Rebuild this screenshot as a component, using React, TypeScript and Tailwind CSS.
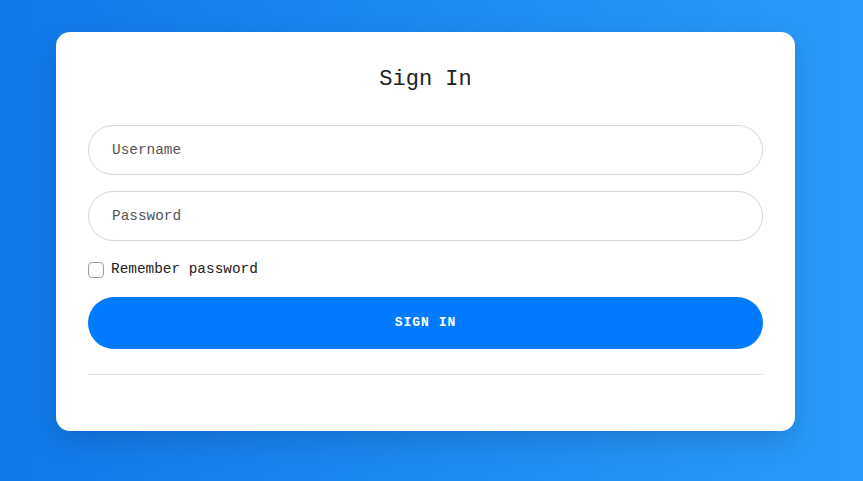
import React from "react";

export default function App() {
  return (
    <div
      className="w-[863px] h-[481px] bg-gradient-to-r from-[#1078ea] to-[#2a9bfa] pt-[32px] pl-[56px]"
      style={{ fontFamily: '"Liberation Mono", "DejaVu Sans Mono", monospace' }}
    >
      <div className="w-[739px] h-[399px] bg-white rounded-[14px] shadow-[0_10px_30px_rgba(0,0,0,0.15)] px-[32px] pt-[30px] flex flex-col">
        <h1 className="text-center text-[22px] leading-[36px] text-[#222] mb-[27px]">Sign In</h1>
        <div className="flex flex-col gap-[16px]">
          <input
            placeholder="Username"
            className="h-[50px] w-full rounded-full border border-[#d4d6db] px-[23px] text-[14.4px] text-[#444] placeholder:text-[#555] outline-none"
          />
          <input
            type="password"
            placeholder="Password"
            className="h-[50px] w-full rounded-full border border-[#d4d6db] px-[23px] text-[14.4px] text-[#444] placeholder:text-[#555] outline-none"
          />
        </div>
        <label className="flex items-center gap-[7px] mt-[21px] h-[16px] text-[14.4px] text-[#222]">
          <span className="w-[16px] h-[16px] rounded-[4px] border border-[#9aa0a8] bg-white inline-block"></span>
          Remember password
        </label>
        <button className="mt-[19px] h-[52px] w-full rounded-full bg-[#007bff] text-white text-[13px] font-bold tracking-[1px]">
          SIGN IN
        </button>
        <div className="mt-[25px] h-px bg-[#e3e3e3]"></div>
      </div>
    </div>
  );
}
